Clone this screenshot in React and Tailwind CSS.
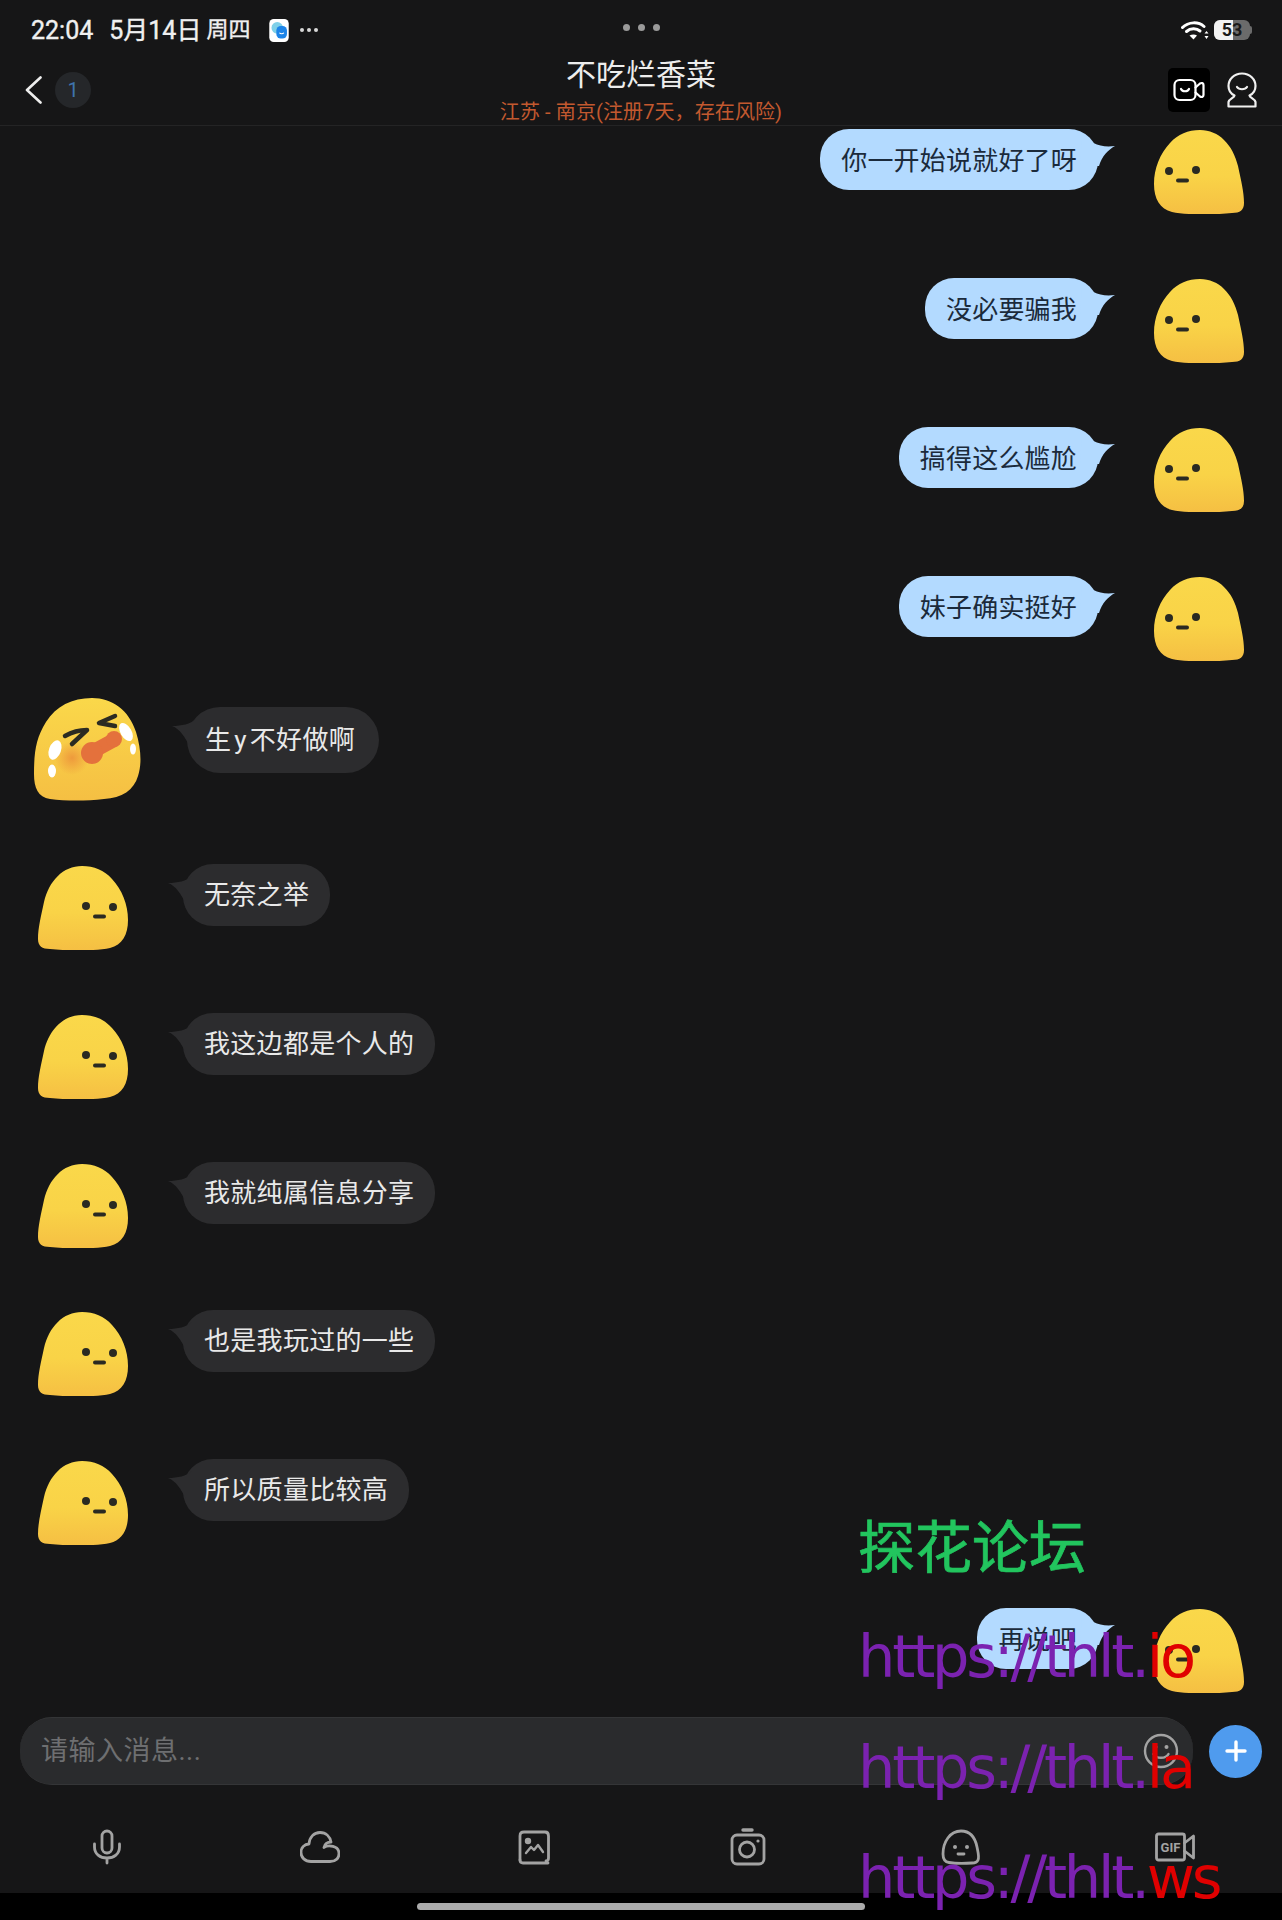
import React from 'react';

const FONT = "font-['Roboto','Noto_Sans_CJK_SC',sans-serif]";

const messages = [
    { side: 'right', text: '你一开始说就好了呀', gap: 'mt-[3px]' },
    { side: 'right', text: '没必要骗我', gap: 'mt-[64px]' },
    { side: 'right', text: '搞得这么尴尬', gap: 'mt-[64px]' },
    { side: 'right', text: '妹子确实挺好', gap: 'mt-[64px]' },
    { side: 'left', text: '生\u200ay\u200a不好做啊', gap: 'mt-[37px]', big: true },
    { side: 'left', text: '无奈之举', gap: 'mt-[63px]' },
    { side: 'left', text: '我这边都是个人的', gap: 'mt-[63px]' },
    { side: 'left', text: '我就纯属信息分享', gap: 'mt-[63px]' },
    { side: 'left', text: '也是我玩过的一些', gap: 'mt-[62px]' },
    { side: 'left', text: '所以质量比较高', gap: 'mt-[63px]' },
    { side: 'right', text: '再说吧', gap: 'mt-[63px]' },
];

const Blob = ({ mirrored }) => (
    <svg viewBox="0 0 90 84" className={`w-[90px] h-[84px] shrink-0 ${mirrored ? '-scale-x-100' : ''}`}>
        <defs>
            <linearGradient id="blobFill" x1="0" y1="0" x2="0" y2="1">
                <stop offset="0" stopColor="#fad84a" />
                <stop offset="0.55" stopColor="#f9d347" />
                <stop offset="1" stopColor="#f5bf43" />
            </linearGradient>
        </defs>
        <path
            d="M46 0C65 0 79 15 84 36C87 50 90 62 90 73C90 80 86 83 78 83C60 85 32 85 18 82C6 79 0 69 0 54C0 38 6 24 16 13C24 4 34 0 46 0Z"
            fill="url(#blobFill)"
        />
        <circle cx="15" cy="41" r="4" fill="#2a2a22" />
        <circle cx="42" cy="40" r="4" fill="#2a2a22" />
        <rect x="22" y="48.5" width="13" height="4" rx="2" fill="#2a2a22" />
    </svg>
);

const CryingBlob = () => (
    <svg viewBox="0 0 107 103" className="w-[107px] h-[103px] shrink-0">
        <defs>
            <linearGradient id="cryFill" x1="0" y1="0" x2="0" y2="1">
                <stop offset="0" stopColor="#fad84a" />
                <stop offset="1" stopColor="#f5bf43" />
            </linearGradient>
            <radialGradient id="blush">
                <stop offset="0" stopColor="#ee9a3c" />
                <stop offset="1" stopColor="#ee9a3c" stopOpacity="0" />
            </radialGradient>
        </defs>
        <path
            d="M58 0C78 0 95 12 102 34C107 50 108 66 104 78C100 92 88 100 70 101C52 103 32 103 16 101C4 99 0 90 0 76C0 54 2 40 12 24C22 8 38 0 58 0Z"
            fill="url(#cryFill)"
        />
        <circle cx="38" cy="60" r="17" fill="url(#blush)" />
        <path d="M31 38C38 34 46 32 53 32L38 46" fill="none" stroke="#2b2b22" strokeWidth="4.5" strokeLinecap="round" strokeLinejoin="round" />
        <path d="M81 18L65 25L81 28" fill="none" stroke="#2b2b22" strokeWidth="4.5" strokeLinecap="round" strokeLinejoin="round" />
        <path d="M58 54L80 42" fill="none" stroke="#e4713c" strokeWidth="14" strokeLinecap="round" />
        <circle cx="58" cy="55" r="11" fill="#e4713c" />
        <circle cx="80" cy="41" r="8" fill="#e4713c" />
        <ellipse cx="21" cy="52" rx="6" ry="10" transform="rotate(20 21 52)" fill="#fff" />
        <ellipse cx="18" cy="73" rx="4" ry="6.5" fill="#fff" />
        <ellipse cx="92" cy="34" rx="5.5" ry="10" transform="rotate(-30 92 34)" fill="#fff" />
        <ellipse cx="99" cy="51" rx="3" ry="5.5" fill="#fff" />
    </svg>
);

const RightBubble = ({ text }) => (
    <div className="relative h-[61px] px-[21px] pt-[3px] rounded-[29px] bg-[#b3daff] text-[#1b2a3b] text-[26px] tracking-[0.2px] flex items-center whitespace-nowrap">
        {text}
        <svg viewBox="0 0 35 32" className="absolute -right-[17px] top-[5px] w-[35px] h-[32px]">
            <path d="M2 0C10 9 20 14 35 12C28 16 22 22 19 32L0 32Z" fill="#b3daff" />
        </svg>
    </div>
);

const LeftBubble = ({ text, big }) => (
    <div className={`relative bg-[#2c2c2e] text-[#e9e9e9] text-[26px] tracking-[0.3px] flex items-center whitespace-nowrap ${big ? 'h-[66px] pl-[18px] pr-[24px] rounded-[33px]' : 'h-[62px] px-[21px] rounded-[30px]'}`}>
        {text}
        <svg viewBox="0 0 24 28" className="absolute -left-[15px] top-[12px] w-[24px] h-[28px]">
            <path d="M24 0C18 5 10 7 0 7C8 10 13 18 18 28L24 28Z" fill="#2c2c2e" />
        </svg>
    </div>
);

const Message = ({ side, text, gap, big }) => {
    if (side === 'right') {
        return (
            <div className={`flex justify-end items-start pr-[38px] gap-[56px] ${gap}`}>
                <RightBubble text={text} />
                <div className="mt-px"><Blob /></div>
            </div>
        );
    }
    if (big) {
        return (
            <div className={`flex items-start pl-[34px] gap-[46px] ${gap}`}>
                <CryingBlob />
                <div className="mt-[9px]"><LeftBubble text={text} big /></div>
            </div>
        );
    }
    return (
        <div className={`flex items-start pl-[38px] gap-[55px] ${gap}`}>
            <div className="mt-[2px]"><Blob mirrored /></div>
            <LeftBubble text={text} />
        </div>
    );
};

const StatusBar = () => (
    <div className="grid grid-cols-[1fr_auto_1fr] items-center h-[60px] pl-[31px] pr-[30px]">
        <div className="flex items-center text-[#f0f0f0] text-[25px] leading-none [-webkit-text-stroke:0.4px_#f0f0f0]">
            <span>22:04</span>
            <span className="ml-[16px]">5月14日</span>
            <span className="ml-[5px] text-[22px]">周四</span>
            <svg viewBox="0 0 22 26" className="ml-[18px] w-[22px] h-[23px]">
                <rect width="22" height="26" rx="5" fill="#fff" />
                <circle cx="9" cy="10" r="6.5" fill="#7fd0e8" />
                <rect x="8" y="8" width="12" height="14" rx="5" fill="#1c84e8" />
                <path d="M11.5 15.5C12.5 17 15.5 17 16.5 15.5" stroke="#fff" strokeWidth="1.2" fill="none" />
            </svg>
            <div className="ml-[10px] flex gap-[3px]">
                <span className="w-[4px] h-[4px] rounded-full bg-[#d8d8d8]" />
                <span className="w-[4px] h-[4px] rounded-full bg-[#d8d8d8]" />
                <span className="w-[4px] h-[4px] rounded-full bg-[#d8d8d8]" />
            </div>
        </div>
        <div className="flex gap-[8px] pr-px -mt-[6px]">
            <span className="w-[7px] h-[7px] rounded-full bg-[#9a9a9a]" />
            <span className="w-[7px] h-[7px] rounded-full bg-[#9a9a9a]" />
            <span className="w-[7px] h-[7px] rounded-full bg-[#9a9a9a]" />
        </div>
        <div className="flex items-center justify-end gap-[5px]">
            <svg viewBox="0 0 28 20" className="w-[28px] h-[20px]" fill="none" stroke="#fff" strokeLinecap="round">
                <path d="M1.5 7.5C7.5 1.5 17.5 1.5 23 6.5" strokeWidth="3" />
                <path d="M5.5 11.5C9.5 8 15.5 8 19 11" strokeWidth="3" />
                <path d="M8.5 15.5L12.5 19.5L16 15.5C14 14 11 14 8.5 15.5Z" fill="#fff" stroke="none" />
                <path d="M25.5 11L23.5 13.5H27.5ZM25.5 19L23.5 16H27.5Z" fill="#fff" stroke="none" />
            </svg>
            <div className="relative w-[36px] h-[20px] rounded-[6px] overflow-hidden bg-[#6b6b6b] flex">
                <div className="w-[19px] bg-[#f2f2f2]" />
                <span className="absolute inset-0 flex items-center justify-center text-[18px] font-bold text-[#1a1a1a] leading-none">53</span>
            </div>
            <div className="w-[2px] h-[8px] -ml-[5px] rounded-r bg-[#6b6b6b]" />
        </div>
    </div>
);

const NavBar = () => (
    <div className="grid grid-cols-[1fr_auto_1fr] h-[66px] border-b border-[#242425]">
        <div className="flex items-center pl-[25px] pb-[6px]">
            <svg viewBox="0 0 17 28" className="w-[17px] h-[28px]" fill="none" stroke="#eeeeee" strokeWidth="2.6" strokeLinecap="round" strokeLinejoin="round">
                <path d="M15.5 1.5L2 14L15.5 26.5" />
            </svg>
            <div className="ml-[13px] w-[36px] h-[36px] rounded-full bg-[#25272a] text-[#3f74ad] text-[20px] flex items-center justify-center">1</div>
        </div>
        <div className="flex flex-col items-center">
            <div className="text-[#ededed] text-[30px] leading-[30px] h-[30px]">不吃烂香菜</div>
            <div className="text-[#c2592f] text-[20px] leading-[26px] mt-[9px] tracking-[0.1px]">江苏 - 南京(注册7天，存在风险)</div>
        </div>
        <div className="flex items-start justify-end pt-[8px] pr-[25px]">
            <div className="w-[42px] h-[44px] rounded-[5px] bg-black flex items-center justify-center">
                <svg viewBox="0 0 32 24" className="w-[32px] h-[24px]" fill="none" stroke="#fff" strokeWidth="2.2" strokeLinecap="round" strokeLinejoin="round">
                    <rect x="1.5" y="2" width="21" height="20" rx="5" />
                    <path d="M8 11C9.5 14 14.5 14 16 11" />
                    <path d="M22.5 9.5L27 5.5C28.5 4.5 30.5 5 30.5 7V17C30.5 19 28.5 19.5 27 18.5L22.5 14.5" />
                </svg>
            </div>
            <svg viewBox="0 0 30 36" className="ml-[17px] mt-[4px] w-[30px] h-[36px]" fill="none" stroke="#f0f0f0" strokeWidth="2.2" strokeLinecap="round" strokeLinejoin="round">
                <path d="M15 1.5C23 1.5 28.5 7.5 28.5 14C28.5 19 25.5 22 22.5 23.5C23 26 28 27 28.5 30V34.5H1.5V30C2 27 7 26 7.5 23.5C4.5 22 1.5 19 1.5 14C1.5 7.5 7 1.5 15 1.5Z" />
                <path d="M10 15C12 18 18 18 20 15" />
            </svg>
        </div>
    </div>
);

const ICON = { fill: 'none', stroke: '#a3a3a3', strokeWidth: 2.8, strokeLinecap: 'round', strokeLinejoin: 'round' };

const toolbarIcons = [
    <svg viewBox="0 0 40 40" className="w-[40px] h-[40px]" key="mic" {...ICON}>
        <rect x="15" y="4" width="10" height="22" rx="5" />
        <path d="M7.5 17V20C7.5 27 13 31 20 31C27 31 32.5 27 32.5 20V17M20 31V36" />
    </svg>,
    <svg viewBox="0 0 40 40" className="w-[40px] h-[40px]" key="cloud" {...ICON}>
        <path d="M11 34.5C5 34.5 1 30.5 1 25.5C1 20.5 4.5 17 9 17C9.5 10 14 5.5 20 5.5C26 5.5 30 9.5 31 15C27.5 15 24.5 17 24 20.5C28 17.5 39 18.5 39 26.5C39 31 36 34.5 30 34.5Z" />
    </svg>,
    <svg viewBox="0 0 40 40" className="w-[40px] h-[40px]" key="image" {...ICON}>
        <path d="M6 33V9C6 6.5 7.5 5 10 5H31C33 5 34.5 6.5 34.5 9V31C34.5 33 33.5 34 32 34" />
        <path d="M34 36H9C7 36 6 35 6 33" />
        <circle cx="14" cy="14" r="1.8" fill="#a3a3a3" />
        <path d="M12 26L17 20L20 23L24 18L29 25" strokeWidth="2.4" />
    </svg>,
    <svg viewBox="0 0 40 40" className="w-[40px] h-[40px]" key="camera" {...ICON}>
        <path d="M15 3H24" strokeWidth="3.4" />
        <rect x="4" y="8" width="32" height="29" rx="5" />
        <circle cx="19" cy="22.5" r="7.5" />
        <circle cx="30" cy="14" r="1.6" fill="#a3a3a3" stroke="none" />
    </svg>,
    <svg viewBox="0 0 40 40" className="w-[40px] h-[40px]" key="blob" {...ICON}>
        <path d="M20 4C29 4 34 10 36 20C37 25 38.5 30 37 33C36 35.5 34 36 31 36C24 36.5 14 36.5 8 35.5C4 35 2 32 2 27C2 15 9 4 20 4Z" />
        <circle cx="14" cy="20" r="2" fill="#a3a3a3" stroke="none" />
        <circle cx="26" cy="20" r="2" fill="#a3a3a3" stroke="none" />
        <path d="M17 27H23" />
    </svg>,
    <svg viewBox="0 0 40 40" className="w-[40px] h-[40px]" key="gif" {...ICON}>
        <rect x="1.5" y="7" width="28" height="26" rx="2" />
        <path d="M29.5 16L38.5 9V31L29.5 24" />
        <text x="15.5" y="25" textAnchor="middle" fontSize="13" fontWeight="700" fill="#a3a3a3" stroke="none" fontFamily="Roboto, sans-serif">GIF</text>
    </svg>,
];

const Composer = () => (
    <div className="flex items-center pl-[20px] pr-[20px]">
        <div className="flex-1 h-[68px] rounded-[32px] bg-[#2a2b2d] border-t border-b border-[#343537] flex items-center justify-between pl-[21px] pr-[14px]">
            <span className="text-[#6e6f71] text-[27px] tracking-[0.5px]">请输入消息...</span>
            <svg viewBox="0 0 36 36" className="w-[36px] h-[36px]" fill="none" stroke="#a3a3a3" strokeWidth="2.4" strokeLinecap="round">
                <circle cx="18" cy="18" r="16" />
                <circle cx="12.5" cy="14" r="2" fill="#a3a3a3" stroke="none" />
                <circle cx="23.5" cy="14" r="2" fill="#a3a3a3" stroke="none" />
                <path d="M10.5 21C13 26 23 26 25.5 21" />
            </svg>
        </div>
        <div className="ml-[16px] w-[53px] h-[53px] rounded-full bg-[#4f9bee] flex items-center justify-center">
            <svg viewBox="0 0 22 22" className="w-[22px] h-[22px]" stroke="#fff" strokeWidth="3.4" strokeLinecap="round">
                <path d="M11 2V20M2 11H20" />
            </svg>
        </div>
    </div>
);

const Watermark = () => (
    <div className="absolute left-[858px] top-[1508px] pointer-events-none font-['DejaVu_Sans','Noto_Sans_CJK_SC',sans-serif]">
        <div className="text-[#22c55e] text-[57px] leading-[70px] h-[70px] [-webkit-text-stroke:0.7px_#22c55e] font-['Noto_Sans_CJK_SC',sans-serif]">探花论坛</div>
        <div className="mt-[24px] flex flex-col text-[59px] leading-[110.5px] tracking-[-3.2px] whitespace-nowrap">
            <div className="text-[#7b22b0]">https://thlt.<span className="text-[#e00000]">io</span></div>
            <div className="text-[#7b22b0]">https://thlt.<span className="text-[#e00000]">la</span></div>
            <div className="text-[#7b22b0]">https://thlt.<span className="text-[#e00000]">ws</span></div>
        </div>
    </div>
);

const App = () => (
    <div className={`relative w-[1282px] h-[1920px] overflow-hidden bg-[#161617] flex flex-col ${FONT}`}>
        <StatusBar />
        <NavBar />
        <div className="flex-1 min-h-0 overflow-hidden">
            {messages.map((m, i) => (
                <Message key={i} {...m} />
            ))}
        </div>
        <Composer />
        <div className="h-[108px] grid grid-cols-6 items-center pt-[15px] shrink-0">
            {toolbarIcons.map((icon, i) => (
                <div key={i} className="flex justify-center">{icon}</div>
            ))}
        </div>
        <div className="h-[27px] bg-black flex justify-center pt-[10px] shrink-0">
            <div className="w-[448px] h-[7px] rounded-full bg-[#ababab]" />
        </div>
        <Watermark />
    </div>
);

export default App;
